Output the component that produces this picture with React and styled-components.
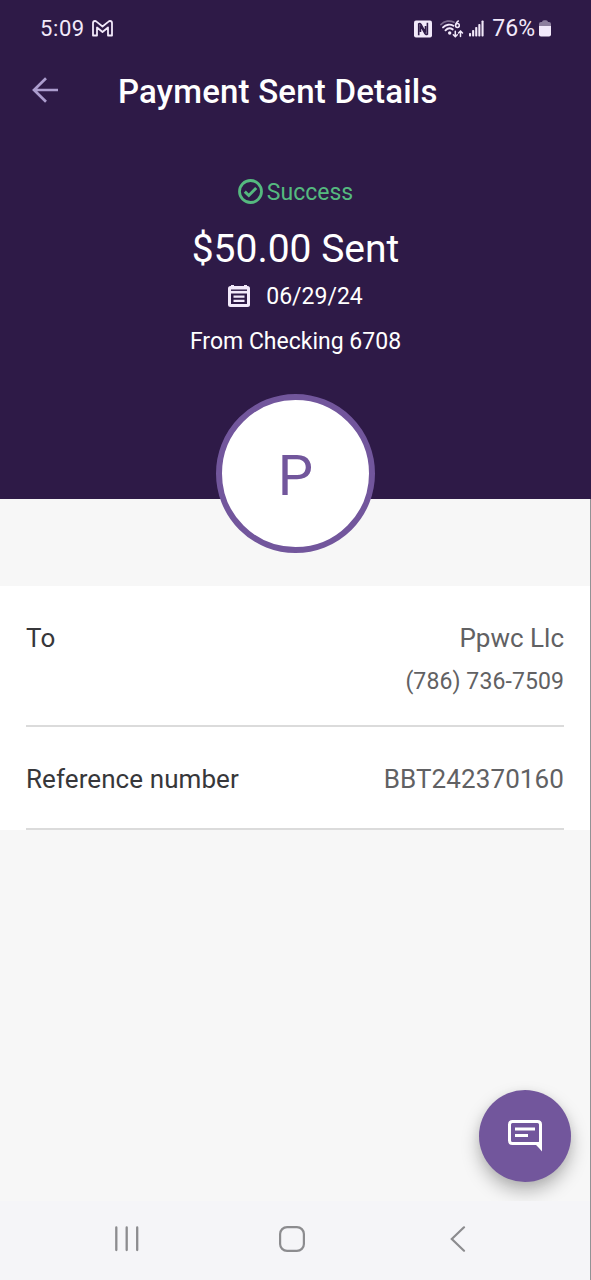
import React from "react";
import styled, { createGlobalStyle } from "styled-components";

const Global = createGlobalStyle`
  * { box-sizing: border-box; }
  body { margin: 0; font-family: Roboto, "Liberation Sans", sans-serif; }
  svg { display: block; flex: none; }
`;

const Screen = styled.div`
  position: relative;
  display: flex;
  flex-direction: column;
  width: 591px;
  height: 1280px;
  overflow: hidden;
  background: #f7f7f7;
`;

const EdgeLine = styled.div`
  position: absolute;
  top: 499px;
  right: 0;
  bottom: 0;
  width: 1px;
  background: #929295;
`;

const Hero = styled.header`
  display: flex;
  flex-direction: column;
  height: 499px;
  background: #2e1a47;
  color: #fff;
`;

const StatusBar = styled.div`
  display: flex;
  align-items: center;
  justify-content: space-between;
  height: 57px;
  padding: 0 40px;
  color: #f2e9fa;
`;

const StatusGroup = styled.div`
  display: flex;
  align-items: center;
  gap: ${(p) => p.$gap}px;
`;

const Text = styled.span`
  display: block;
  margin: 0;
  white-space: nowrap;
  font-size: ${(p) => p.$size}px;
  line-height: ${(p) => p.$line || 30}px;
  font-weight: ${(p) => p.$weight || 400};
  letter-spacing: ${(p) => p.$track || 0}px;
  color: ${(p) => p.$color || "inherit"};
`;

const TitleBar = styled.div`
  display: flex;
  align-items: center;
  gap: 59px;
  height: 69px;
  padding-left: 31px;
`;

const Summary = styled.div`
  display: flex;
  flex-direction: column;
  align-items: center;
  padding-top: 51px;
`;

const SummaryLine = styled.div`
  display: flex;
  align-items: center;
  gap: ${(p) => p.$gap || 0}px;
  height: ${(p) => p.$height}px;
`;

const Avatar = styled.div`
  display: flex;
  align-items: center;
  justify-content: center;
  flex: none;
  align-self: center;
  width: 159px;
  height: 159px;
  margin-top: -105px;
  padding-top: 5px;
  border: 6.5px solid #72569c;
  border-radius: 50%;
  background: #fff;
`;

const Details = styled.section`
  margin-top: 33px;
  height: 244px;
  padding: 0 27px 0 26px;
  background: #fff;
`;

const Row = styled.div`
  display: flex;
  justify-content: space-between;
  height: ${(p) => p.$height}px;
  padding-top: 37px;
  border-bottom: 2px solid #dbdbdb;
`;

const Values = styled.div`
  display: flex;
  flex-direction: column;
  align-items: flex-end;
  gap: 14px;
`;

const ChatArea = styled.div`
  position: relative;
  flex: 1;
  overflow: hidden;
`;

const ChatButton = styled.button`
  position: absolute;
  right: 20px;
  bottom: 19.5px;
  display: flex;
  align-items: center;
  justify-content: center;
  width: 92px;
  height: 92px;
  padding: 0;
  border: 0;
  border-radius: 50%;
  background: #72569c;
  box-shadow: 0 9px 18px rgba(0, 0, 0, 0.27), 0 2px 10px rgba(0, 0, 0, 0.06);
`;

const NavBar = styled.nav`
  display: flex;
  align-items: center;
  justify-content: space-between;
  height: 79px;
  padding: 0 125px 3px 114px;
  background: #f5f5f8;
`;

const GmailIcon = () => (
  <svg width="21" height="17" viewBox="0 0 21 17" fill="none" stroke="currentColor" strokeWidth="1.8" strokeLinejoin="round">
    <path d="M1 15.500V3Q1 1 3 1Q3.800 1 4.500 1.600L10.500 6.500 16.500 1.600Q17.200 1 18 1Q20 1 20 3V15.500H16V7.500L10.500 12 5 7.500V15.500Z" />
  </svg>
);

const NfcIcon = () => (
  <svg width="18" height="18" viewBox="0 0 18 18">
    <rect y=".5" width="18" height="17" rx="2" fill="currentColor" />
    <path d="M4.700 15.200V4Q6 3 7 4.500L11.500 12.700V6M13.400 2.800V14Q12 15 11 13.500L6.500 5.300V12" fill="none" stroke="#2e1a47" strokeWidth="1.600" />
  </svg>
);

const WifiIcon = () => (
  <svg width="24" height="18" viewBox="0 0 24 18" fill="none" stroke="currentColor" strokeLinecap="round">
    <path d="M1 4.500C4.500.700 10 .200 14 2.200" strokeWidth="1.800" opacity=".4" />
    <path d="M3 7.400C6 4.300 10.400 4 13.300 5.700M5.500 10.300C7.500 8.200 10.500 8 12.700 9.400" strokeWidth="1.900" />
    <circle cx="9.700" cy="13" r="1.700" fill="currentColor" stroke="none" />
    <path d="M18.300 1C16.300 2.200 15.500 3.500 15.500 5.200" strokeWidth="1.500" />
    <circle cx="17.400" cy="5.500" r="1.900" strokeWidth="1.500" />
    <path d="M15.300 11.200v5.300M13.300 14.700l2 2 2-2M20.500 16.500v-5.300M18.500 13l2-2 2 2" strokeWidth="1.500" />
  </svg>
);

const SignalIcon = () => (
  <svg width="15" height="17" viewBox="0 0 15 17" fill="currentColor">
    <rect x="0" y="13" width="2.100" height="3.500" rx=".8" />
    <rect x="3.100" y="10" width="2.100" height="6.500" rx=".8" />
    <rect x="6.200" y="7" width="2.100" height="9.500" rx=".8" />
    <rect x="9.300" y="4" width="2.100" height="12.500" rx=".8" />
    <rect x="12.500" y=".5" width="2.100" height="16" rx=".8" />
  </svg>
);

const BatteryIcon = () => (
  <svg width="12" height="17" viewBox="0 0 12 17">
    <path d="M0 6V4Q0 2 2 2H3Q3.200.200 5 .200H7Q8.800.200 9 2H10Q12 2 12 4V6Z" fill="#8d7f9e" />
    <path d="M0 6H12V14.500Q12 16.500 10 16.500H2Q0 16.500 0 14.500Z" fill="currentColor" />
  </svg>
);

const BackArrow = () => (
  <svg width="28" height="30" viewBox="0 0 28 30" fill="none" stroke="#ac9dce" strokeWidth="2.700">
    <path d="M27 13H3M15 1.200L3 13 15 24.800" />
  </svg>
);

const CheckCircle = () => (
  <svg width="25" height="28" viewBox="0 0 25 28" fill="none" stroke="#55b97f">
    <circle cx="12.500" cy="12.500" r="11" strokeWidth="2.800" />
    <path d="M6.800 12.700L10.800 16.500 18.200 9" strokeWidth="3" />
  </svg>
);

const CalendarIcon = () => (
  <svg width="22" height="24" viewBox="0 0 22 24">
    <rect y="1" width="22" height="21" rx="2.500" fill="#f2e9fa" />
    <path d="M4.500 0v3M17.500 0v3" stroke="#f2e9fa" strokeWidth="3" />
    <path d="M3 5.200H19" stroke="#2e1a47" strokeWidth="1.400" />
    <rect x="3" y="8.500" width="16" height="10.500" fill="#2e1a47" />
    <path d="M5.500 11.700H16.500M5.500 15.900H16.500" stroke="#f2e9fa" strokeWidth="2.300" />
  </svg>
);

const ChatIcon = () => (
  <svg width="36" height="34" viewBox="0 0 36 34" fill="none" stroke="#fff">
    <path d="M30 24.500H5.500Q2.500 24.500 2.500 21.500V5.500Q2.500 2.500 5.500 2.500H30.500Q33.500 2.500 33.500 5.500V27.500L30 24.500Z" strokeWidth="3" />
    <path d="M27.500 24L35 32.500V22Z" fill="#fff" stroke="none" />
    <path d="M8 10H28M8 16.500H21" strokeWidth="3" />
  </svg>
);

const RecentsIcon = () => (
  <svg width="25" height="26" viewBox="0 0 25 26" stroke="#8c8c8f" strokeWidth="2.300" strokeLinecap="round">
    <path d="M2.300 1.500V24M12.700 1.500V24M23.200 1.500V24" />
  </svg>
);

const HomeIcon = () => (
  <svg width="31" height="26" viewBox="0 0 31 26" fill="none" stroke="#8c8c8f" strokeWidth="2.200">
    <rect x="1.100" y="1.100" width="23.800" height="23.800" rx="7" />
  </svg>
);

const NavBackIcon = () => (
  <svg width="16" height="26" viewBox="0 0 16 26" fill="none" stroke="#8c8c8f" strokeWidth="2.200" strokeLinecap="round">
    <path d="M14 1.300L1.800 13 14 24.700" />
  </svg>
);

export default function App() {
  return (
    <Screen>
      <Global />
      <Hero>
        <StatusBar>
          <StatusGroup $gap={7}>
            <Text $size={22} $track={0.6}>5:09</Text>
            <GmailIcon />
          </StatusGroup>
          <StatusGroup $gap={4}>
            <StatusGroup $gap={8}>
              <NfcIcon />
              <StatusGroup $gap={5}>
                <WifiIcon />
                <SignalIcon />
              </StatusGroup>
              <Text $size={23}>76%</Text>
            </StatusGroup>
            <BatteryIcon />
          </StatusGroup>
        </StatusBar>
        <TitleBar>
          <BackArrow />
          <Text as="h1" $size={33} $weight={500} $line={40} $track={0.2}>
            Payment Sent Details
          </Text>
        </TitleBar>
        <Summary>
          <SummaryLine $height={32} $gap={4}>
            <CheckCircle />
            <Text $size={23} $color="#55b97f">Success</Text>
          </SummaryLine>
          <SummaryLine $height={80}>
            <Text $size={39} $line={50}>$50.00 Sent</Text>
          </SummaryLine>
          <SummaryLine $height={16} $gap={16}>
            <CalendarIcon />
            <Text $size={23}>06/29/24</Text>
          </SummaryLine>
          <SummaryLine $height={73}>
            <Text $size={23}>From Checking 6708</Text>
          </SummaryLine>
        </Summary>
      </Hero>
      <Avatar>
        <Text $size={56} $line={60} $color="#72569c">P</Text>
      </Avatar>
      <Details>
        <Row $height={141}>
          <Text $size={26} $track={0.3} $color="#37373a">To</Text>
          <Values>
            <Text $size={26} $color="#616163">Ppwc Llc</Text>
            <Text $size={23} $track={0.1} $color="#616163">(786) 736-7509</Text>
          </Values>
        </Row>
        <Row $height={103}>
          <Text $size={26} $track={0.08} $color="#37373a">Reference number</Text>
          <Text $size={26} $track={0.1} $color="#616163">BBT242370160</Text>
        </Row>
      </Details>
      <ChatArea>
        <ChatButton aria-label="Chat">
          <ChatIcon />
        </ChatButton>
      </ChatArea>
      <NavBar>
        <RecentsIcon />
        <HomeIcon />
        <NavBackIcon />
      </NavBar>
      <EdgeLine />
    </Screen>
  );
}
